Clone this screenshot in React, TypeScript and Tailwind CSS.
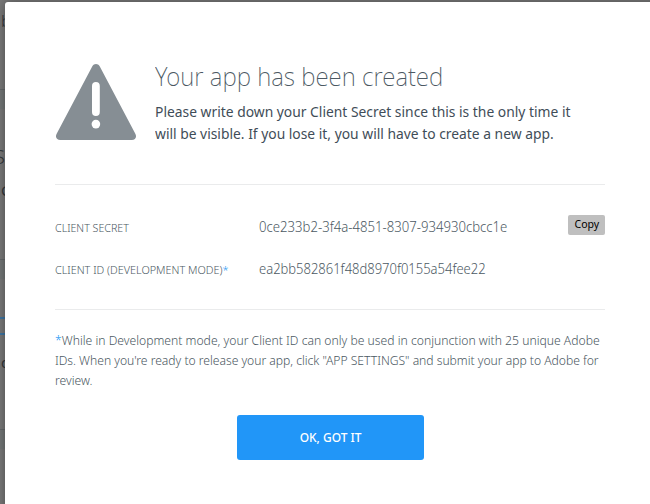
import React from "react";

function WarningIcon() {
  return (
    <svg width="81" height="77" viewBox="0 0 81 77" className="ml-px block shrink-0">
      <path
        d="M36.2 2.4C38.2 -0.7 41.8 -0.7 43.8 2.4L79.2 69.4C81.2 73 79.4 76 75.8 76H4.2C0.6 76 -1.2 73 0.8 69.4Z"
        fill="#868e94"
      />
      <rect x="36" y="18" width="7.8" height="34" rx="3.9" fill="#fff" />
      <circle cx="39.9" cy="60.1" r="4.3" fill="#fff" />
    </svg>
  );
}

function PageBehind() {
  return (
    <div className="flex h-full w-[5px] flex-col overflow-hidden bg-[#7a7a7a] text-[#34383c]">
      <div className="flex h-[89px] shrink-0 pt-[9px] pl-px text-[17px] font-light leading-6">b</div>
      <div className="h-5 shrink-0 border-t border-[#66696b] bg-[#747878]" />
      <div className="flex h-[143px] shrink-0 flex-col pt-[36px]">
        <span className="self-end text-[20px] leading-6 font-light">S</span>
        <span className="mt-[11px] pl-px text-[15px] leading-5">C</span>
      </div>
      <div className="mt-[7px] h-5 shrink-0 border-t border-[#66696b] bg-[#747878]" />
      <div className="mt-[38px] h-[18px] shrink-0 border-y-2 border-[#3f77a5]" />
      <div className="mt-[17px] flex h-5 shrink-0 pl-px text-[15px] leading-5">d</div>
      <div className="mt-[57px] h-5 shrink-0 border-t border-[#66696b] bg-[#747878]" />
    </div>
  );
}

export default function App() {
  return (
    <div className="relative h-[504px] w-[650px] overflow-hidden bg-[#7a7a7a] font-['Noto_Sans','Open_Sans',sans-serif]">
      <PageBehind />
      <main className="absolute top-[2px] left-[5px] h-[520px] w-[660px] rounded-[3px] bg-white pr-[60px] pl-[50px] text-[#4b5862] shadow-[0_0_12px_rgba(0,0,0,0.4)]">
        <header className="flex h-[183px] border-b border-[#eaebec] pt-[62px]">
          <WarningIcon />
          <div className="ml-[18px] whitespace-nowrap">
            <h1 className="-mt-px origin-left scale-x-[0.928] text-[26px] leading-[26px] font-extralight">Your app has been created</h1>
            <p className="mt-[11px] origin-left scale-x-[0.923] text-[15px] leading-[22px] text-[#3f4d58]">
              Please write down your Client Secret since this is the only time it
              <br />
              will be visible. If you lose it, you will have to create a new app.
            </p>
          </div>
        </header>
        <dl className="flex h-[125px] flex-col border-b border-[#eaebec] pt-[21px] font-light whitespace-nowrap">
          <div className="flex h-[42px] items-center">
            <dt className="w-[204px] origin-left scale-x-[0.97] pt-[2px] text-[11px]">CLIENT SECRET</dt>
            <dd className="w-[290px] origin-left scale-x-[0.876] pb-[2px] text-[15px]">0ce233b2-3f4a-4851-8307-934930cbcc1e</dd>
            <button className="mb-[5px] ml-auto flex h-5 w-[37px] items-center justify-center rounded-[2px] bg-[#bfbfbf] pb-px text-[11px] font-normal text-black">
              <span className="scale-x-[0.96]">Copy</span>
            </button>
          </div>
          <div className="flex h-[42px] items-center">
            <dt className="w-[204px] origin-left scale-x-[0.985] pt-[2px] text-[11px]">CLIENT ID (DEVELOPMENT MODE)<span className="text-[#2196f3]">*</span></dt>
            <dd className="origin-left scale-x-[0.866] pb-[2px] text-[15px]">ea2bb582861f48d8970f0155a54fee22</dd>
          </div>
        </dl>
        <p className="mt-5 origin-left scale-x-[0.935] text-[13px] leading-5 font-light whitespace-nowrap">
          <span className="text-[#2196f3]">*</span>While in Development mode, your Client ID can only be used in conjunction with 25 unique Adobe
          <br />
          <span className="tracking-[-0.03px]">IDs. When you're ready to release your app, click "APP SETTINGS" and submit your app to Adobe for</span>
          <br />
          review.
        </p>
        <button className="mt-[25px] ml-[182px] flex h-[45px] w-[187px] items-center justify-center rounded-[3px] bg-[#2196f8] pt-px text-[13px] font-medium text-white">
          <span className="scale-x-[0.92]">OK, GOT IT</span>
        </button>
      </main>
    </div>
  );
}
